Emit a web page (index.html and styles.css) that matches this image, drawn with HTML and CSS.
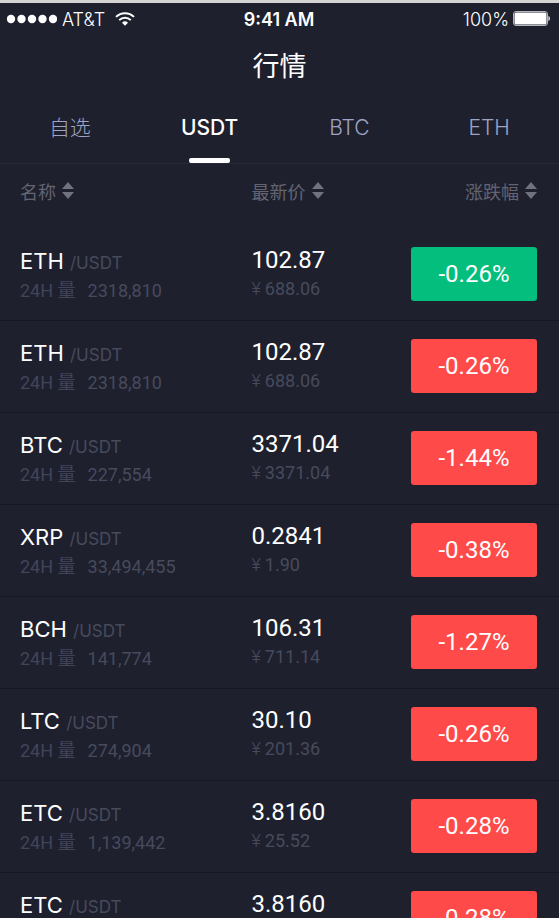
FILE: index.html
```html
<!DOCTYPE html>
<html lang="zh-CN">
<head>
    <meta charset="UTF-8">
    <meta name="viewport" content="width=device-width, initial-scale=1.0">
    <title>行情</title>
    <link rel="stylesheet" href="styles.css">
</head>
<body>
    <div class="status-bar">
        <div class="carrier">
            <svg class="signal" width="50" height="10" viewBox="0 0 50 10" fill="#fff">
                <circle cx="4" cy="5" r="4.2"/>
                <circle cx="14.5" cy="5" r="4.2"/>
                <circle cx="25" cy="5" r="4.2"/>
                <circle cx="35.5" cy="5" r="4.2"/>
                <circle cx="46" cy="5" r="4.2"/>
            </svg>
            <span>AT&amp;T</span>
            <svg class="wifi" width="20" height="14" viewBox="0 0 20 14" fill="none" stroke="#fff" stroke-width="2">
                <path d="M1 4.9a13 13 0 0 1 18 0"/>
                <path d="M4.2 8.1a8.4 8.4 0 0 1 11.6 0"/>
                <path d="M10 13.8 7 10.8a4.3 4.3 0 0 1 6 0z" fill="#fff" stroke="none"/>
            </svg>
        </div>
        <div class="time">9:41 AM</div>
        <div class="power">
            <span>100%</span>
            <svg width="38" height="16" viewBox="0 0 38 16">
                <rect x="0.5" y="0.5" width="34" height="14" rx="2.5" fill="none" stroke="#b4b5ba"/>
                <rect x="1.5" y="1.5" width="32" height="12" rx="1.5" fill="#fff"/>
                <path d="M35.5 5c1.8.5 1.8 4.5 0 5z" fill="#fff"/>
            </svg>
        </div>
    </div>

    <header class="title">
        <h1>行情</h1>
    </header>

    <nav class="tabs">
        <button class="tab">自选</button>
        <button class="tab active">USDT</button>
        <button class="tab">BTC</button>
        <button class="tab">ETH</button>
    </nav>

    <table class="market">
        <thead>
            <tr>
                <th class="col-name"><button class="sort">名称 <svg width="12" height="17" viewBox="0 0 12 17"><path d="M6 0l6 7H0zM6 17l6-7H0z"/></svg></button></th>
                <th class="col-price"><button class="sort">最新价 <svg width="12" height="17" viewBox="0 0 12 17"><path d="M6 0l6 7H0zM6 17l6-7H0z"/></svg></button></th>
                <th class="col-change"><button class="sort">涨跌幅 <svg width="12" height="17" viewBox="0 0 12 17"><path d="M6 0l6 7H0zM6 17l6-7H0z"/></svg></button></th>
            </tr>
        </thead>
        <tbody>
            <tr>
                <td class="col-name">
                    <div class="pair">ETH <span>/USDT</span></div>
                    <div class="volume"><span>24H 量</span>2318,810</div>
                </td>
                <td class="col-price">
                    <div class="price">102.87</div>
                    <div class="cny"><span>¥</span>688.06</div>
                </td>
                <td class="col-change"><div class="change up">-0.26%</div></td>
            </tr>
            <tr>
                <td class="col-name">
                    <div class="pair">ETH <span>/USDT</span></div>
                    <div class="volume"><span>24H 量</span>2318,810</div>
                </td>
                <td class="col-price">
                    <div class="price">102.87</div>
                    <div class="cny"><span>¥</span>688.06</div>
                </td>
                <td class="col-change"><div class="change">-0.26%</div></td>
            </tr>
            <tr>
                <td class="col-name">
                    <div class="pair">BTC <span>/USDT</span></div>
                    <div class="volume"><span>24H 量</span>227,554</div>
                </td>
                <td class="col-price">
                    <div class="price">3371.04</div>
                    <div class="cny"><span>¥</span>3371.04</div>
                </td>
                <td class="col-change"><div class="change">-1.44%</div></td>
            </tr>
            <tr>
                <td class="col-name">
                    <div class="pair">XRP <span>/USDT</span></div>
                    <div class="volume"><span>24H 量</span>33,494,455</div>
                </td>
                <td class="col-price">
                    <div class="price">0.2841</div>
                    <div class="cny"><span>¥</span>1.90</div>
                </td>
                <td class="col-change"><div class="change">-0.38%</div></td>
            </tr>
            <tr>
                <td class="col-name">
                    <div class="pair">BCH <span>/USDT</span></div>
                    <div class="volume"><span>24H 量</span>141,774</div>
                </td>
                <td class="col-price">
                    <div class="price">106.31</div>
                    <div class="cny"><span>¥</span>711.14</div>
                </td>
                <td class="col-change"><div class="change">-1.27%</div></td>
            </tr>
            <tr>
                <td class="col-name">
                    <div class="pair">LTC <span>/USDT</span></div>
                    <div class="volume"><span>24H 量</span>274,904</div>
                </td>
                <td class="col-price">
                    <div class="price">30.10</div>
                    <div class="cny"><span>¥</span>201.36</div>
                </td>
                <td class="col-change"><div class="change">-0.26%</div></td>
            </tr>
            <tr>
                <td class="col-name">
                    <div class="pair">ETC <span>/USDT</span></div>
                    <div class="volume"><span>24H 量</span>1,139,442</div>
                </td>
                <td class="col-price">
                    <div class="price">3.8160</div>
                    <div class="cny"><span>¥</span>25.52</div>
                </td>
                <td class="col-change"><div class="change">-0.28%</div></td>
            </tr>
            <tr>
                <td class="col-name">
                    <div class="pair">ETC <span>/USDT</span></div>
                    <div class="volume"><span>24H 量</span>1,139,442</div>
                </td>
                <td class="col-price">
                    <div class="price">3.8160</div>
                    <div class="cny"><span>¥</span>25.52</div>
                </td>
                <td class="col-change"><div class="change">-0.28%</div></td>
            </tr>
        </tbody>
    </table>
</body>
</html>
```
FILE: styles.css
```css
* {
    box-sizing: border-box;
}

body {
    margin: 0;
    border-top: 3px solid #d4d4d4;
    background: #1e202e;
    color: #fff;
    font-family: Roboto, "Noto Sans CJK SC", sans-serif;
}

button {
    margin: 0;
    padding: 0;
    border: none;
    background: none;
    color: inherit;
    font: inherit;
    cursor: pointer;
}

/* Status bar */
.status-bar {
    display: grid;
    grid-template-columns: 1fr auto 1fr;
    align-items: center;
    height: 32px;
    padding: 0 8px 0 7px;
    font-family: Inter, sans-serif;
    font-size: 18px;
}

.carrier,
.power {
    display: flex;
    align-items: center;
    gap: 5px;
    font-weight: 300;
}

.wifi {
    margin-left: 5px;
}

.time {
    font-weight: 600;
}

.power {
    justify-content: flex-end;
    gap: 4px;
}

.title h1 {
    margin: 0;
    padding-top: 4px;
    font-size: 27px;
    font-weight: 400;
    line-height: 56px;
    text-align: center;
}

/* Tabs */
.tabs {
    display: grid;
    grid-template-columns: repeat(4, 1fr);
    height: 69px;
    border-bottom: 1px solid #282a39;
}

.tab {
    position: relative;
    padding-bottom: 3px;
    color: #9fa3c4;
    font-family: Inter, "Noto Sans CJK SC", sans-serif;
    font-size: 21px;
    font-weight: 300;
    line-height: 32px;
}

.tab.active {
    color: #fff;
    font-weight: 500;
}

.tab.active::after {
    content: "";
    position: absolute;
    bottom: 0;
    left: 50%;
    width: 41px;
    height: 5px;
    margin-left: -21px;
    border-radius: 2px;
    background: #fff;
}

/* Market table */
.market {
    width: 100%;
    border-collapse: separate;
    border-spacing: 0;
    table-layout: fixed;
}

.market th {
    height: 65px;
    padding-top: 0;
    padding-bottom: 12px;
    font-weight: 400;
    text-align: left;
}

.market td {
    height: 92px;
    padding-top: 18px;
    padding-bottom: 0;
    border-bottom: 1px solid #171825;
    vertical-align: top;
}

.market .col-name {
    width: 45%;
    padding-left: 20px;
    padding-right: 0;
}

.market .col-price {
    width: 28%;
    padding-left: 0;
    padding-right: 0;
}

.market .col-change {
    width: 27%;
    padding-left: 0;
    padding-right: 22px;
    text-align: right;
}

.market td.col-name {
    padding-top: 16px;
}

.market td.col-price {
    padding-top: 15px;
}

.sort {
    display: inline-flex;
    align-items: center;
    gap: 6px;
    color: #626472;
    font-size: 18px;
}

.sort svg {
    fill: #70727f;
}

.pair,
.price {
    font-size: 24px;
    line-height: 32px;
}

.pair {
    font-family: Inter, sans-serif;
    font-size: 22px;
}

.pair span {
    color: #474a5c;
    font-size: 17px;
}

.volume,
.cny {
    color: #474a5c;
    font-size: 18px;
    line-height: 26px;
}

.volume {
    line-height: 24px;
}

.volume span {
    margin-right: 12px;
    color: #42455a;
}

.cny span {
    margin-right: 4px;
    font-weight: 300;
}

.change {
    width: 126px;
    height: 54px;
    margin-left: auto;
    border-radius: 3px;
    background: #ff4a4a;
    font-size: 24px;
    line-height: 54px;
    text-align: center;
}

.change.up {
    background: #03be7c;
}
```
